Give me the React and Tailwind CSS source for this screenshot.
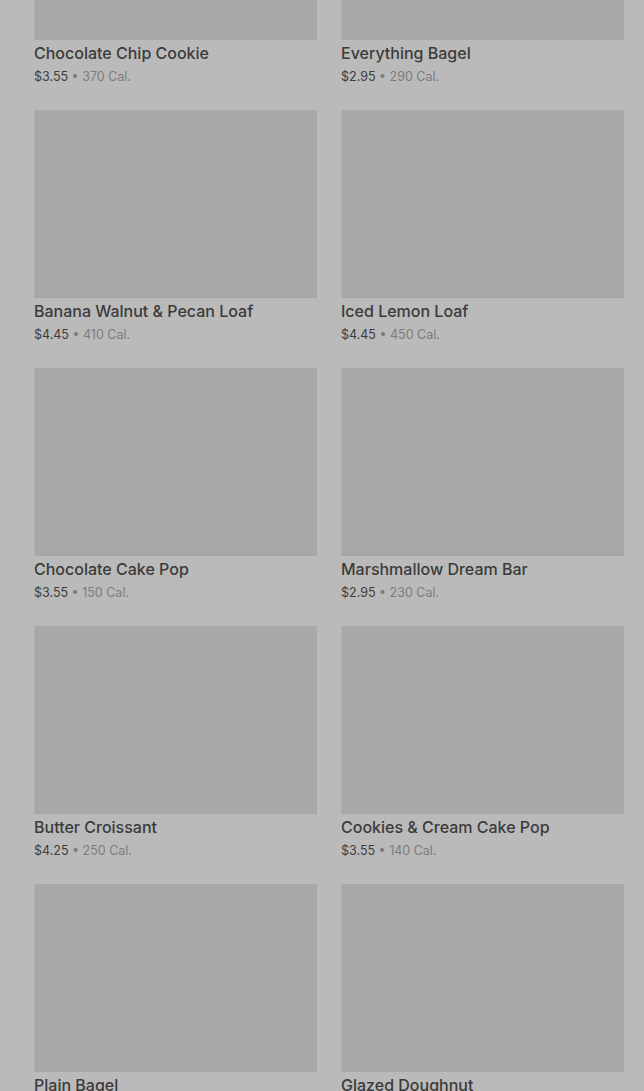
import React from "react";

const items = [
  { name: "Chocolate Chip Cookie", price: "$3.55", cal: "370 Cal." },
  { name: "Everything Bagel", price: "$2.95", cal: "290 Cal." },
  { name: "Banana Walnut & Pecan Loaf", price: "$4.45", cal: "410 Cal." },
  { name: "Iced Lemon Loaf", price: "$4.45", cal: "450 Cal." },
  { name: "Chocolate Cake Pop", price: "$3.55", cal: "150 Cal." },
  { name: "Marshmallow Dream Bar", price: "$2.95", cal: "230 Cal." },
  { name: "Butter Croissant", price: "$4.25", cal: "250 Cal." },
  { name: "Cookies & Cream Cake Pop", price: "$3.55", cal: "140 Cal." },
  { name: "Plain Bagel", price: "$3.25", cal: "280 Cal." },
  { name: "Glazed Doughnut", price: "$2.75", cal: "480 Cal." },
];

const ItemCard = ({ item }) => (
  <div className="flex flex-col">
    <div className="h-[188px] w-full bg-[#a8a8a8] shadow-[inset_1px_0_0_#adadad,inset_0_-1px_0_#a4a4a4]" />
    <p className="pt-[2px] text-[16px] leading-[22px] font-medium text-[#3b3b3b]">
      {item.name}
    </p>
    <p className="pt-[1px] text-[12.5px] leading-[24px] text-[#3d3d3d]">
      {item.price}
      <span className="text-[#7c7c7c]"> • {item.cal}</span>
    </p>
  </div>
);

export default function App() {
  return (
    <div
      className="h-screen overflow-hidden bg-[#bababa]"
      style={{ fontFamily: "Inter, 'Liberation Sans', sans-serif" }}
    >
      <div className="mt-[-148px] grid grid-cols-2 gap-x-[24px] gap-y-[21px] pl-[34px] pr-[20px]">
        {items.map((item) => (
          <ItemCard key={item.name} item={item} />
        ))}
      </div>
    </div>
  );
}
